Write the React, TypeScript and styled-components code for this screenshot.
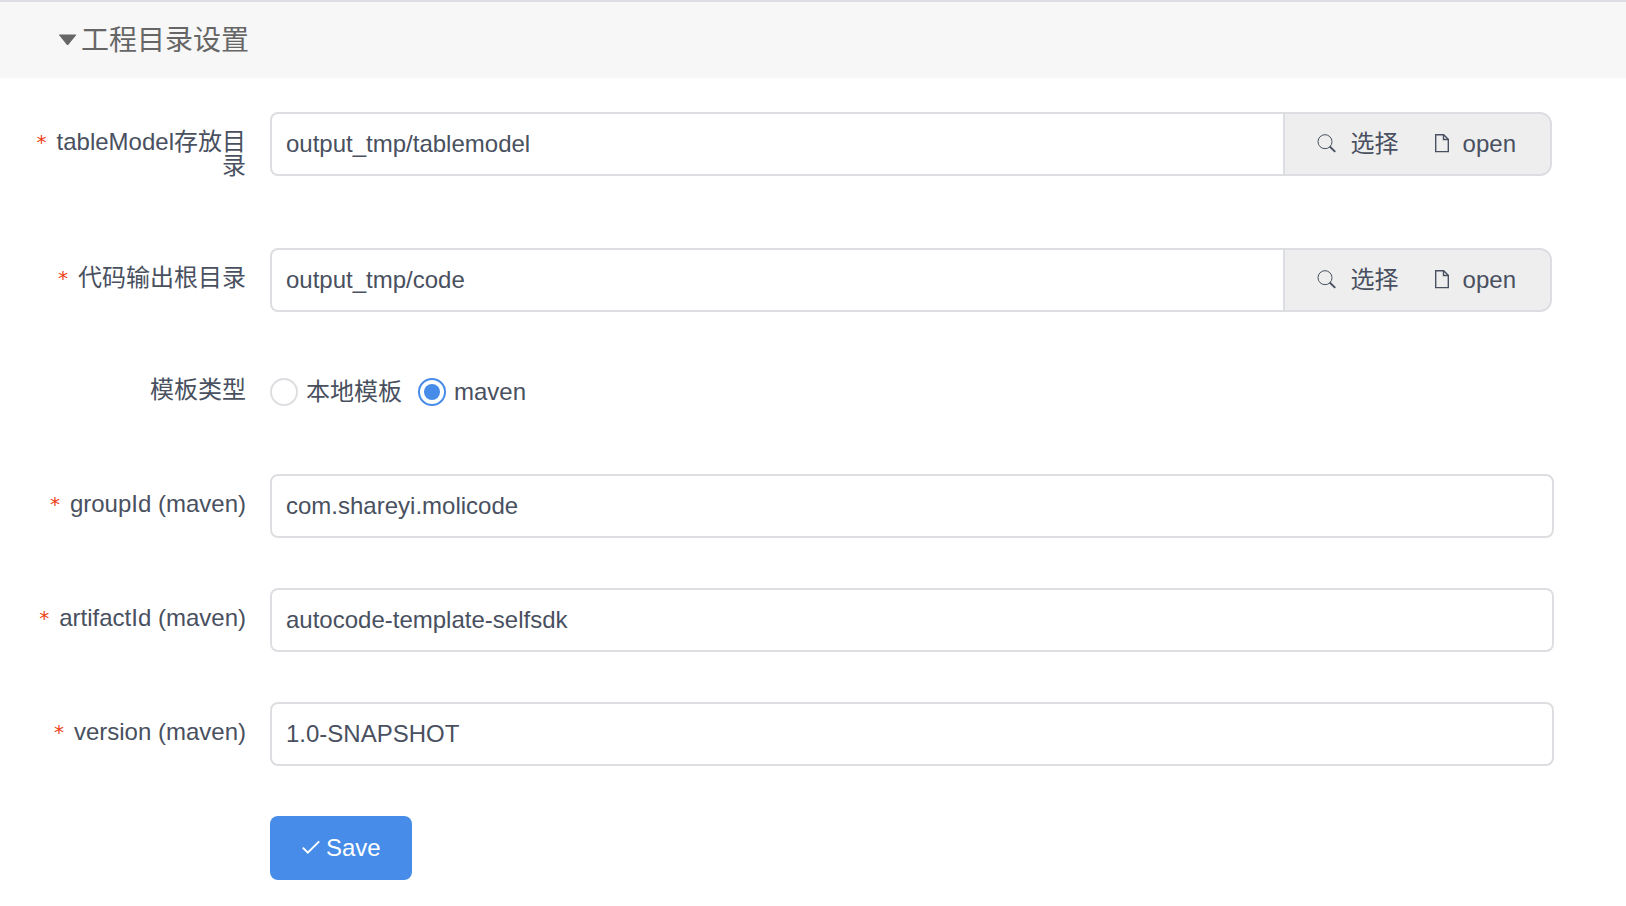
import React from "react";
import styled, { createGlobalStyle, css } from "styled-components";

const colors = {
  text: "#495060",
  heading: "#666666",
  border: "#dddee1",
  primary: "#468ce8",
  required: "#ed4014",
  header: "#f7f7f7",
  append: "#eeeeee",
};

const GlobalStyle = createGlobalStyle`
  *, *::before, *::after { box-sizing: border-box; }
  body {
    margin: 0;
    background: #fff;
    color: ${colors.text};
    font-family: "Liberation Sans", "Noto Sans CJK SC", sans-serif;
    font-size: 24px;
    line-height: 1;
  }
  button, input { font: inherit; color: inherit; }
`;

const Panel = styled.section`
  width: 100%;
`;

const PanelHeader = styled.h2`
  margin: 0;
  border-top: 2px solid #dcdce2;
  background: ${colors.header};
  color: ${colors.heading};
  font-size: 28px;
  font-weight: 400;
`;

const PanelToggle = styled.button`
  display: flex;
  align-items: center;
  gap: 4px;
  width: 100%;
  height: 76px;
  padding: 2px 58px 0;
  border: 0;
  background: none;
  text-align: left;
  cursor: pointer;
`;

const Form = styled.form`
  display: flex;
  flex-direction: column;
  gap: 48px;
  padding: 34px 72px 26px 0;
`;

const labelStyle = css`
  flex: none;
  width: 270px;
  padding: 18px 24px 22px 32px;
  text-align: right;
`;

const Row = styled.div<{ $compact?: boolean }>`
  display: flex;
  align-items: flex-start;
  min-height: ${(p) => (p.$compact ? "64px" : "66px")};
`;

const Label = styled.label`
  ${labelStyle}
`;

const GroupLabel = styled.span`
  ${labelStyle}
`;

const Required = styled.span`
  margin-right: 10px;
  color: ${colors.required};
  font-family: "DejaVu Sans", sans-serif;
  font-size: 20px;
  line-height: 0;
  vertical-align: 1px;
`;

const Content = styled.div`
  display: flex;
  flex: 1;
  min-width: 0;
`;

const TextInput = styled.input<{ $joined?: boolean }>`
  flex: 1;
  min-width: 0;
  height: 64px;
  padding: 0 14px;
  border: 2px solid ${colors.border};
  border-radius: ${(p) => (p.$joined ? "8px 0 0 8px" : "8px")};
  border-right-width: ${(p) => (p.$joined ? "0" : "2px")};
  background: #fff;
  outline: none;
`;

const Append = styled.div`
  display: flex;
  align-items: center;
  gap: 36px;
  height: 64px;
  margin-right: 2px;
  padding: 0 34px 0 32px;
  border: 2px solid ${colors.border};
  border-radius: 0 12px 12px 0;
  background: ${colors.append};
`;

const AppendButton = styled.button`
  display: flex;
  align-items: center;
  gap: 14px;
  padding: 0;
  border: 0;
  background: none;
  cursor: pointer;
`;

const RadioGroup = styled.div`
  display: flex;
  align-items: center;
  gap: 16px;
  height: 64px;
`;

const RadioLabel = styled.label`
  display: flex;
  align-items: center;
  gap: 8px;
`;

const Radio = styled.input`
  appearance: none;
  display: grid;
  place-items: center;
  width: 28px;
  height: 28px;
  margin: 0;
  border: 2px solid ${colors.border};
  border-radius: 50%;
  background: #fff;

  &:checked { border-color: ${colors.primary}; }
  &:checked::after {
    content: "";
    width: 16px;
    height: 16px;
    border-radius: 50%;
    background: ${colors.primary};
  }
`;

const Actions = styled.div`
  padding-left: 270px;
`;

const SaveButton = styled.button`
  display: flex;
  align-items: center;
  gap: 6px;
  height: 64px;
  padding: 0 31px 0 32px;
  border: 0;
  border-radius: 8px;
  background: ${colors.primary};
  color: #fff;
  cursor: pointer;
`;

const CaretIcon = () => (
  <svg width="19" height="28" viewBox="0 0 19 28" aria-hidden="true">
    <path d="M1.6 7.5h16q1 0 .4.8L10.4 17.7q-.8.8-1.6 0L1.2 8.3q-.6-.8.4-.8z" fill="currentColor" />
  </svg>
);

const SearchIcon = () => (
  <svg width="20" height="20" viewBox="0 0 20 20" fill="none" stroke="currentColor" aria-hidden="true">
    <circle cx="8" cy="7.7" r="7" strokeWidth="1" />
    <path d="M12.8 12.5l5.4 5.4" strokeWidth="1.9" />
  </svg>
);

const FileIcon = () => (
  <svg width="14" height="20" viewBox="0 0 14 20" fill="none" stroke="currentColor" strokeWidth="1.4" aria-hidden="true">
    <path d="M.7 .7h8L13.3 5.3v12.3H.7zM8.5 .7v4.8h4.8" />
  </svg>
);

const CheckIcon = () => (
  <svg width="18" height="16" viewBox="0 0 18 16" fill="none" stroke="currentColor" strokeWidth="2" aria-hidden="true">
    <path d="M.8 7.6l5 5L17.2 1.4" />
  </svg>
);

type FieldProps = { id: string; label: string; value: string; browsable?: boolean };

const Field = ({ id, label, value, browsable }: FieldProps) => (
  <Row $compact={browsable}>
    <Label htmlFor={id}>
      <Required>*</Required>
      {label}
    </Label>
    <Content>
      <TextInput id={id} type="text" defaultValue={value} $joined={browsable} required />
      {browsable && (
        <Append>
          <AppendButton type="button">
            <SearchIcon />
            选择
          </AppendButton>
          <AppendButton type="button">
            <FileIcon />
            open
          </AppendButton>
        </Append>
      )}
    </Content>
  </Row>
);

export default function App() {
  return (
    <Panel>
      <GlobalStyle />
      <PanelHeader>
        <PanelToggle type="button" aria-expanded="true">
          <CaretIcon />
          工程目录设置
        </PanelToggle>
      </PanelHeader>
      <Form onSubmit={(e) => e.preventDefault()}>
        <Field id="tableModel" label="tableModel存放目录" value="output_tmp/tablemodel" browsable />
        <Field id="codeRoot" label="代码输出根目录" value="output_tmp/code" browsable />
        <Row role="radiogroup" aria-labelledby="templateType">
          <GroupLabel id="templateType">模板类型</GroupLabel>
          <RadioGroup>
            <RadioLabel>
              <Radio type="radio" name="templateType" value="local" />
              本地模板
            </RadioLabel>
            <RadioLabel>
              <Radio type="radio" name="templateType" value="maven" defaultChecked />
              maven
            </RadioLabel>
          </RadioGroup>
        </Row>
        <Field id="groupId" label="groupId (maven)" value="com.shareyi.molicode" />
        <Field id="artifactId" label="artifactId (maven)" value="autocode-template-selfsdk" />
        <Field id="version" label="version (maven)" value="1.0-SNAPSHOT" />
        <Actions>
          <SaveButton type="submit">
            <CheckIcon />
            Save
          </SaveButton>
        </Actions>
      </Form>
    </Panel>
  );
}
